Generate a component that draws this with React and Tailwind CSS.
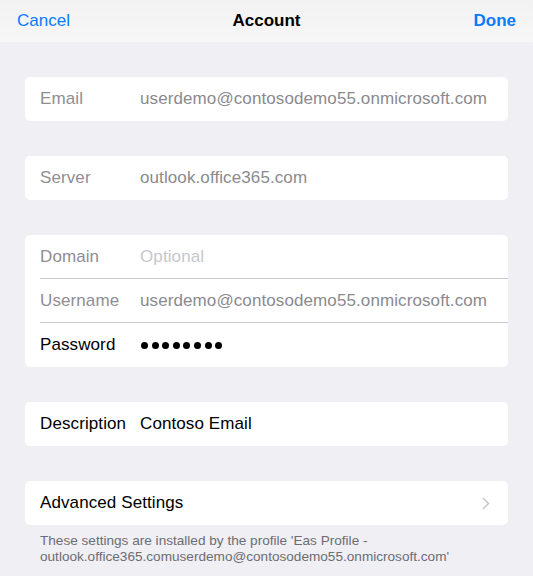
export default function App() {
  const font = { fontFamily: '"Liberation Sans", Arial, sans-serif' };
  const dots = (
    <span className="flex items-center gap-[3.6px] pl-[1px]">
      {Array.from({ length: 8 }).map((_, i) => (
        <span key={i} className="w-[7px] h-[7px] rounded-full bg-black" />
      ))}
    </span>
  );
  return (
    <div className="w-[533px] h-[576px] bg-[#efeff4] overflow-hidden" style={font}>
      {/* Nav bar */}
      <div className="h-[42px] bg-gradient-to-b from-[#f2f2f2] to-[#f7f7f7] flex items-center justify-between px-[17px] relative">
        <span className="text-[17px] text-[#0a7aff]">Cancel</span>
        <span className="absolute left-1/2 -translate-x-1/2 text-[17px] font-semibold text-black">Account</span>
        <span className="text-[17px] font-semibold text-[#0a7aff]">Done</span>
      </div>

      <div className="px-[25px] pt-[35px] flex flex-col gap-[35px]">
        <div className="bg-white rounded-[5px]">
          <Row label="Email" value="userdemo@contosodemo55.onmicrosoft.com" />
        </div>
        <div className="bg-white rounded-[5px]">
          <Row label="Server" value="outlook.office365.com" />
        </div>
        <div className="bg-white rounded-[5px]">
          <Row label="Domain" value="Optional" valueClass="text-[#c7c7cd]" border />
          <Row label="Username" value="userdemo@contosodemo55.onmicrosoft.com" border />
          <Row label="Password" value={dots} labelClass="text-black" />
        </div>
        <div className="bg-white rounded-[5px]">
          <Row label="Description" value="Contoso Email" labelClass="text-black" valueClass="text-black" />
        </div>
        <div className="flex flex-col">
          <div className="bg-white rounded-[5px] h-[44px] flex items-center justify-between pl-[15px] pr-[18px]">
            <span className="text-[17px] tracking-[0.1px] text-black">Advanced Settings</span>
            <svg width="8" height="13" viewBox="0 0 8 13" fill="none">
              <path d="M1 1l5.5 5.5L1 12" stroke="#c7c7cc" strokeWidth="1.5" />
            </svg>
          </div>
          <p className="px-[15px] pt-[8px] text-[13.6px] leading-[16px] text-[#6d6d72]">
            These settings are installed by the profile 'Eas Profile -<br />
            outlook.office365.comuserdemo@contosodemo55.onmicrosoft.com'
          </p>
        </div>
      </div>
    </div>
  );
}

function Row({ label, value, labelClass = 'text-[#8e8e93]', valueClass = 'text-[#8a8a8f]', border }) {
  return (
    <div className="pl-[15px] h-[44px]">
      <div className={`h-full flex items-center ${border ? 'border-b border-[#c8c7cc]' : ''}`}>
        <span className={`w-[100px] shrink-0 text-[17px] tracking-[0.1px] ${labelClass}`}>{label}</span>
        <span className={`text-[17px] tracking-[0.1px] whitespace-nowrap ${valueClass}`}>{value}</span>
      </div>
    </div>
  );
}
